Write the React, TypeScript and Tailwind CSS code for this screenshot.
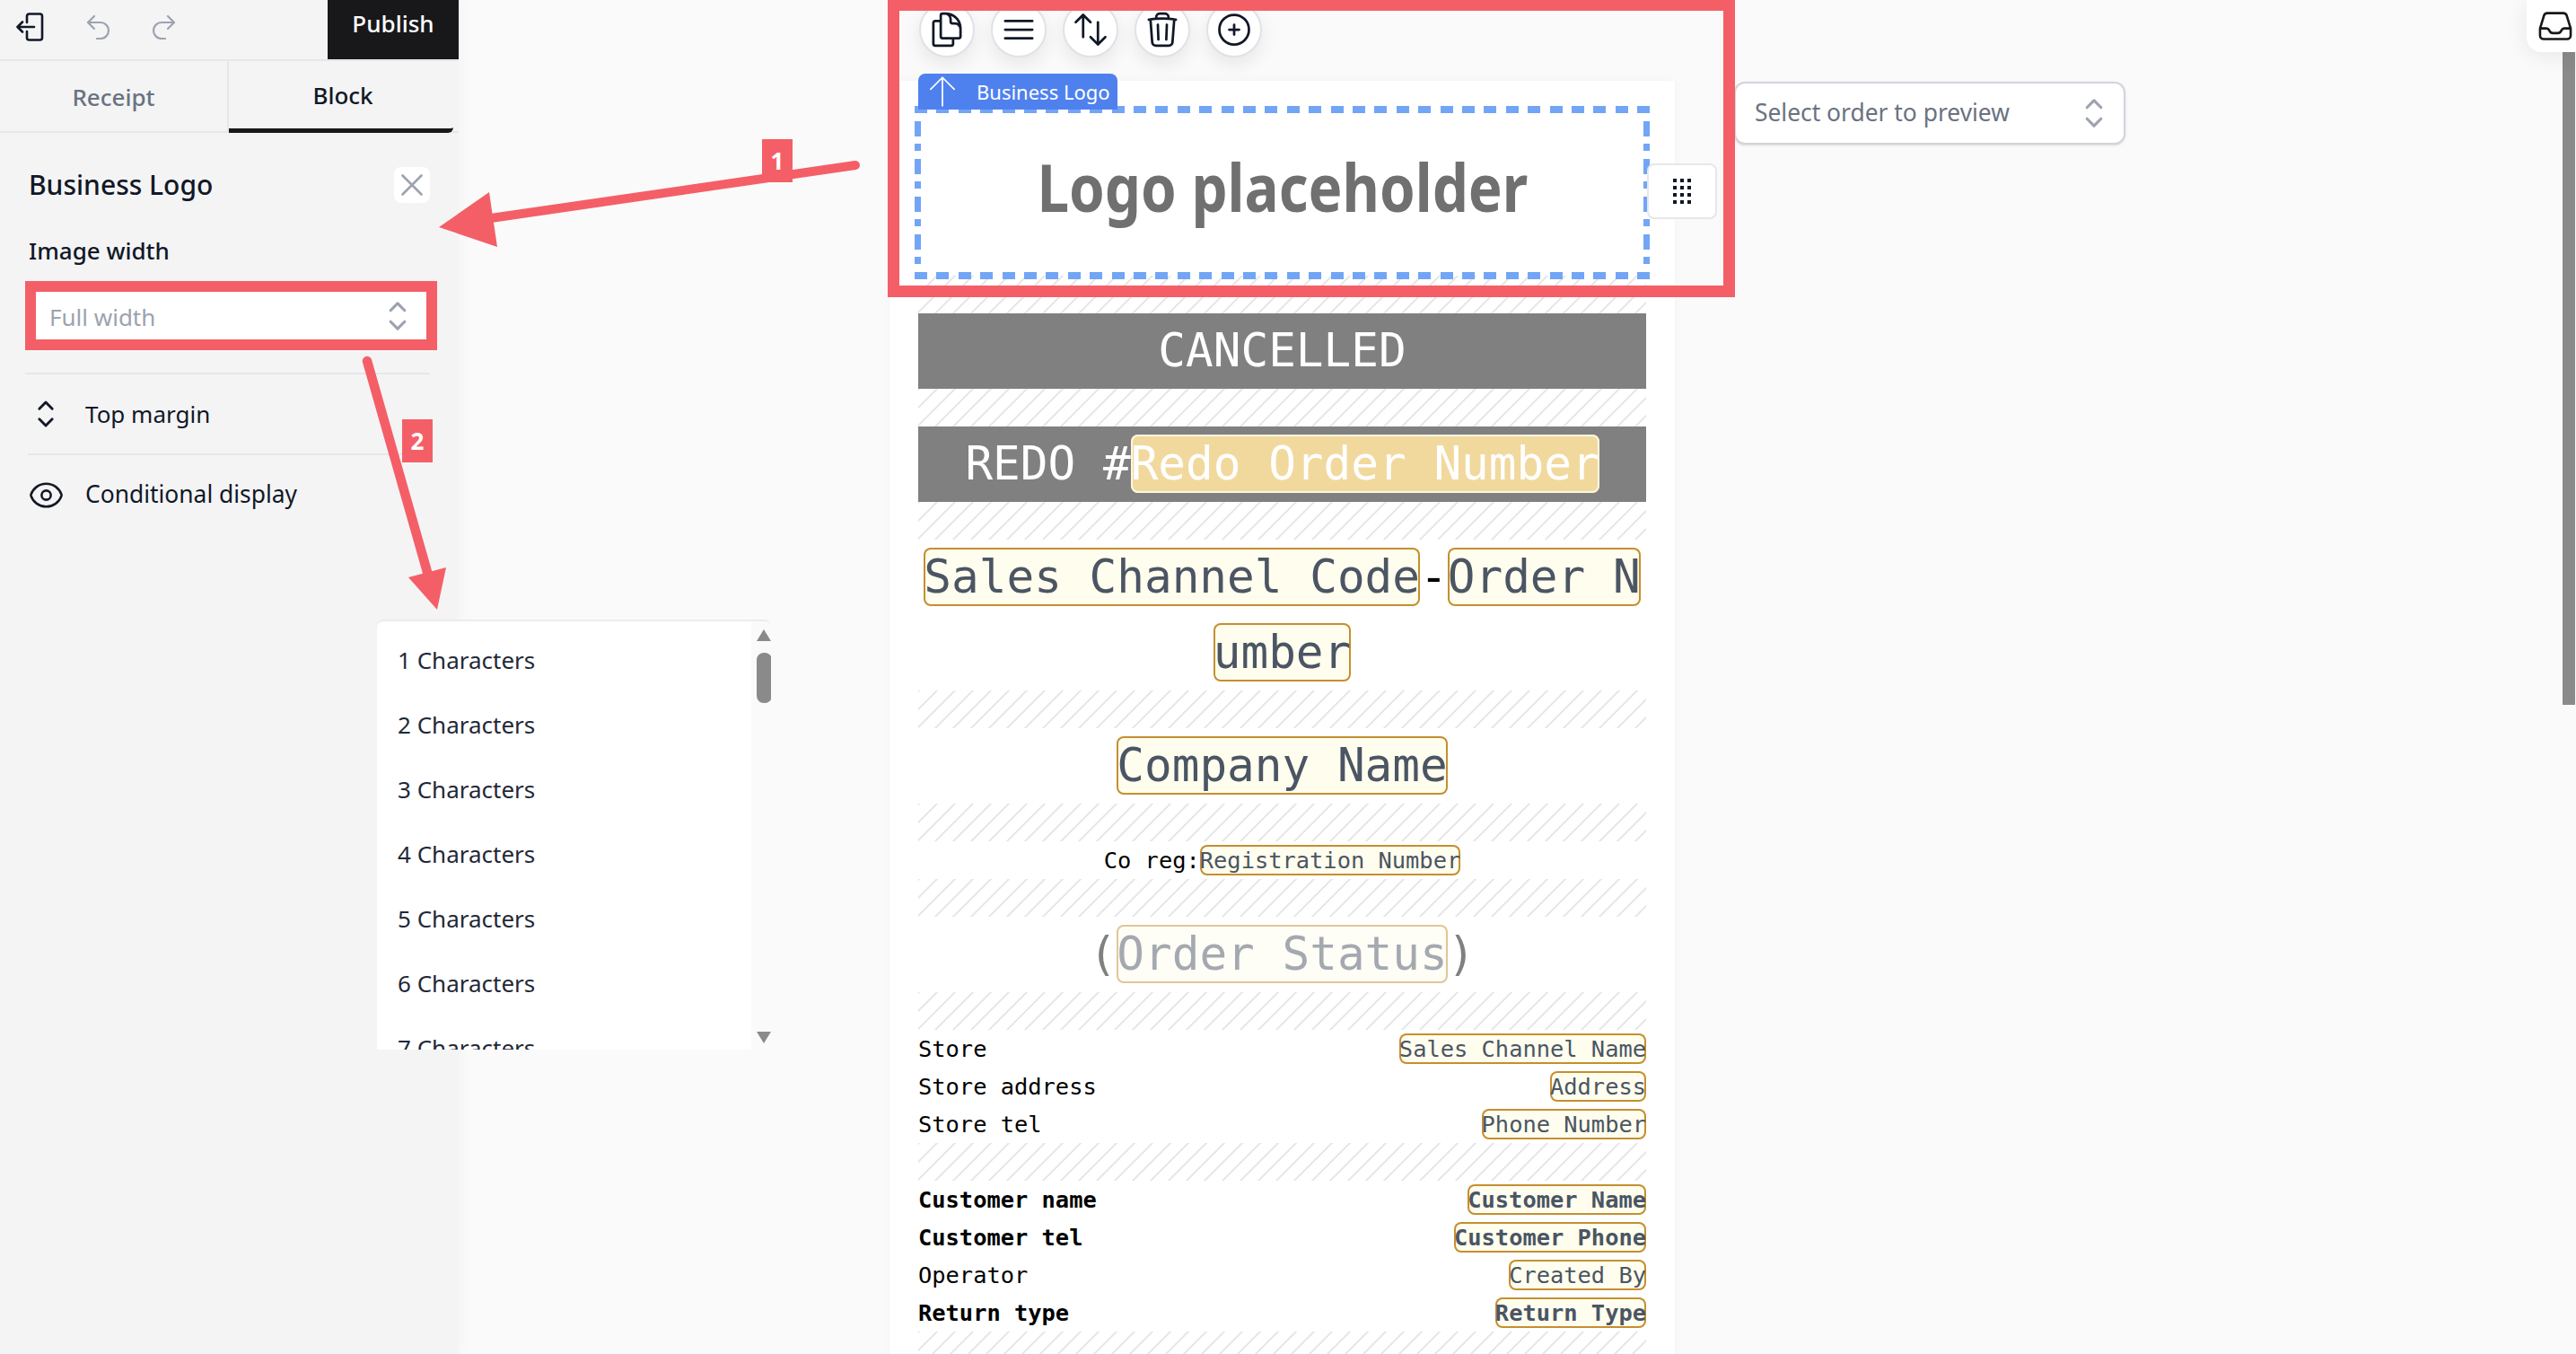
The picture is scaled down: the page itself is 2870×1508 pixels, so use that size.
import React from 'react'
import {
  HiOutlineDocumentDuplicate, HiOutlineBars3, HiOutlineArrowsUpDown, HiOutlineTrash, HiOutlinePlusCircle,
  HiOutlineInbox, HiOutlineArrowUp, HiOutlineXMark, HiOutlineChevronUpDown, HiOutlineEye,
} from 'react-icons/hi2'

const RED = '#f45f67'

function Hatch() {
  return <div className="h-[42px] bg-[repeating-linear-gradient(135deg,#e8e8e8_0,#e8e8e8_1.7px,transparent_1.7px,transparent_14.14px)]" />
}

function Chip({ children, small }: { children: React.ReactNode; small?: boolean }) {
  return (
    <span className={`bg-[#fefdee] text-[#4b5563] rounded-lg [box-decoration-break:clone] shadow-[inset_0_0_0_2px_#c48f30] ${small ? 'py-[2px]' : 'py-[3px]'}`}>
      {children}
    </span>
  )
}

function Row({ label, value, bold }: { label: string; value: string; bold?: boolean }) {
  return (
    <div className={`flex justify-between text-[25.4px] leading-[42px] text-black ${bold ? 'font-bold' : ''}`}>
      <span>{label}</span>
      <span><Chip small>{value}</Chip></span>
    </div>
  )
}

function ExitIcon() {
  return (
    <svg width="32" height="32" viewBox="0 0 32 32" fill="none" stroke="#111827" strokeWidth="2.6" strokeLinecap="round" strokeLinejoin="round">
      <path d="M12 11V4a2.5 2.5 0 0 1 2.5-2.5h12A2.5 2.5 0 0 1 29 4v24a2.5 2.5 0 0 1-2.5 2.5h-12A2.5 2.5 0 0 1 12 28v-7" />
      <path d="M20 16H2M7 10.5 1.5 16 7 21.5" />
    </svg>
  )
}

function UndoIcon({ flip }: { flip?: boolean }) {
  return (
    <svg width="28" height="28" viewBox="0 0 28 28" fill="none" stroke="#9ca3af" strokeWidth="2.2" strokeLinecap="round" strokeLinejoin="round" className={flip ? '-scale-x-100' : ''}>
      <path d="M9 2 2 9l7 7" />
      <path d="M2 9h14a9 9 0 0 1 0 18h-4" />
    </svg>
  )
}

function Sidebar() {
  return (
    <aside className="w-[511px] shrink-0 h-full bg-[#f4f4f5] shadow-[4px_0_14px_rgba(0,0,0,0.025)] text-[#111827]">
      <div className="flex items-center h-[68px] border-b-2 border-[#e5e7eb]">
        <div className="flex items-center gap-[46px] pl-[18px] flex-1 pb-[6px]">
          <div className="flex items-center gap-[46px]">
            <ExitIcon />
            <div className="flex items-center gap-[44px]">
              <UndoIcon />
              <UndoIcon flip />
            </div>
          </div>
        </div>
        <div className="w-[146px] h-[66px] self-start bg-[#18181b] text-white text-[26px] font-medium text-center leading-[52px]">Publish</div>
      </div>
      <div className="flex h-[80px] border-b-2 border-[#e5e7eb] text-[26px]">
        <div className="w-[255px] border-r-2 border-[#e5e7eb] flex items-center justify-center text-[#6b7280] font-medium pt-[2px]">Receipt</div>
        <div className="w-[250px] -mb-[2px] border-b-[5px] border-[#18181b] rounded-br-md flex items-center justify-center font-medium pt-[2px] pl-1">Block</div>
      </div>
      <div className="px-[32px] pt-[38px]">
        <div className="flex items-center justify-between h-[40px]">
          <span className="text-[30px] font-medium leading-none">Business Logo</span>
          <div className="w-[40px] h-[40px] bg-white rounded-lg flex items-center justify-center text-[#9ca3af]">
            <HiOutlineXMark size={42} className="shrink-0" />
          </div>
        </div>
        <div className="mt-[33px] text-[26px] font-medium leading-[40px]">Image width</div>
        <div className="mt-[14px] -mx-[4px] border-[12px] border-[#f45f67] w-[459px] h-[77px] bg-white flex items-center justify-between pl-[15px] pr-[7px]">
          <span className="text-[26px] text-[#9ca3af] pt-[4px]">Full width</span>
          <HiOutlineChevronUpDown size={50} className="text-[#9ca3af] shrink-0" />
        </div>
        <div className="mt-[25px] border-t-2 border-[#e5e7eb] h-[90px] flex items-center gap-[21px] -ml-[4px]">
          <HiOutlineChevronUpDown size={46} className="text-[#111827] shrink-0" />
          <span className="text-[26px]">Top margin</span>
        </div>
        <div className="border-t-2 border-[#e5e7eb] h-[90px] flex items-center gap-[23px] -ml-[1px]">
          <HiOutlineEye size={41} className="shrink-0" />
          <span className="text-[26.4px]">Conditional display</span>
        </div>
      </div>
    </aside>
  )
}

function Receipt() {
  return (
    <div className="mt-[26px] w-[875px] min-h-[1500px] bg-white px-[32px] pt-[28px] relative shadow-[0_0_10px_rgba(0,0,0,0.03)] font-['DejaVu_Sans_Mono',monospace]">
      <div className="absolute left-[32px] -top-[8px] w-[222px] h-[40px] z-10 bg-[#4f81ee] rounded-t-lg flex items-center text-white pl-[6px] gap-[17px] font-['Noto_Sans',sans-serif]">
        <HiOutlineArrowUp size={42} strokeWidth={1} className="shrink-0" />
        <span className="text-[22px] whitespace-nowrap">Business Logo</span>
      </div>
      <div className="relative h-[189px] flex items-center justify-center pb-[10px] font-['Noto_Sans',sans-serif]">
        <div className="absolute -left-[4px] -right-[4px] top-0 -bottom-[4px] [background:repeating-linear-gradient(90deg,#72a5f6_0_14px,transparent_14px_24.4px)_top/100%_8px_no-repeat,repeating-linear-gradient(90deg,#72a5f6_0_14px,transparent_14px_24.4px)_bottom/100%_8px_no-repeat,repeating-linear-gradient(180deg,#72a5f6_0_8px,transparent_8px_17px,#72a5f6_17px_34px,transparent_34px_42px)_left/7px_100%_no-repeat,repeating-linear-gradient(180deg,#72a5f6_0_8px,transparent_8px_17px,#72a5f6_17px_34px,transparent_34px_42px)_right/7px_100%_no-repeat]" />
        <span className="inline-block text-[74px] font-bold text-[#707070] scale-x-[0.86] whitespace-nowrap">Logo placeholder</span>
        <div className="absolute left-[812px] top-[64px] w-[78px] h-[62px] bg-white border-2 border-[#e5e7eb] rounded-lg flex items-center justify-center">
          <svg width="20" height="28" viewBox="0 0 20 28" fill="#111827">
            {[0, 8, 16].flatMap((x) => [0, 8, 16, 24].map((y) => <rect key={`${x}-${y}`} x={x} y={y} width="4" height="4" />))}
          </svg>
        </div>
      </div>
      <Hatch />
      <div className="bg-[#808080] text-white text-[51px] leading-[84px] text-center">CANCELLED</div>
      <Hatch />
      <div className="bg-[#808080] text-white text-[51px] leading-[84px] text-center">
        REDO #<span className="bg-[#f1d99e] rounded-lg py-[3px] shadow-[inset_0_0_0_2px_#fdf6e0]">Redo Order Number</span>
      </div>
      <Hatch />
      <div className="text-[51px] leading-[84px] text-center break-all text-black">
        <Chip>Sales Channel Code</Chip>-<Chip>Order Number</Chip>
      </div>
      <Hatch />
      <div className="text-[51px] leading-[84px] text-center"><Chip>Company Name</Chip></div>
      <Hatch />
      <div className="text-[25.4px] leading-[42px] text-center text-black">Co reg:<Chip small>Registration Number</Chip></div>
      <Hatch />
      <div className="text-[51px] leading-[84px] text-center text-[#808080]">
        (<span className="opacity-50"><Chip>Order Status</Chip></span>)
      </div>
      <Hatch />
      <Row label="Store" value="Sales Channel Name" />
      <Row label="Store address" value="Address" />
      <Row label="Store tel" value="Phone Number" />
      <Hatch />
      <Row label="Customer name" value="Customer Name" bold />
      <Row label="Customer tel" value="Customer Phone" bold />
      <Row label="Operator" value="Created By" />
      <Row label="Return type" value="Return Type" bold />
      <Hatch />
    </div>
  )
}

function Dropdown() {
  const items = [1, 2, 3, 4, 5, 6, 7]
  return (
    <div className="absolute left-[420px] top-[690px] w-[439px] h-[479px] overflow-hidden bg-white rounded-t-lg border-t-2 border-[#ececec]">
      <div className="pt-[7px] pl-[23px]">
        {items.map((n) => (
          <div key={n} className="h-[72px] flex items-center text-[26px] text-[#1f2937]">{n} Characters</div>
        ))}
      </div>
      <div className="absolute right-0 top-0 bottom-0 w-[22px] bg-[#fafafa]">
        <div className="absolute left-[6px] top-[9px] w-0 h-0 border-x-[8px] border-x-transparent border-b-[13px] border-b-[#8a8a8a]" />
        <div className="absolute left-[6px] top-[35px] w-[17px] h-[56px] rounded-lg bg-[#8a8a8a]" />
        <div className="absolute left-[6px] bottom-[7px] w-0 h-0 border-x-[8px] border-x-transparent border-t-[13px] border-t-[#8a8a8a]" />
      </div>
    </div>
  )
}

function Annotations() {
  return (
    <>
      <svg className="absolute inset-0 pointer-events-none" width="2870" height="1508" fill={RED} stroke="none">
        <line x1="953" y1="184" x2="540" y2="244" stroke={RED} strokeWidth="10" strokeLinecap="round" />
        <polygon points="489,253 545,214 554,275" />
        <line x1="409" y1="402" x2="476" y2="637" stroke={RED} strokeWidth="10.5" strokeLinecap="round" />
        <polygon points="455,643 497,632 487,679" />
      </svg>
      <div className="absolute left-[849px] top-[155px] w-[34px] h-[48px] bg-[#f45f67] text-white font-bold text-[26px] flex items-center justify-center">1</div>
      <div className="absolute left-[448px] top-[467px] w-[34px] h-[48px] bg-[#f45f67] text-white font-bold text-[26px] flex items-center justify-center">2</div>
      <div className="absolute left-[989px] -top-[1px] w-[944px] h-[332px] border-[13px] border-[#f45f67] pointer-events-none" />
    </>
  )
}

export default function App() {
  const toolbar = [HiOutlineDocumentDuplicate, HiOutlineBars3, HiOutlineArrowsUpDown, HiOutlineTrash, HiOutlinePlusCircle]
  return (
    <div className="relative w-[2870px] h-[1508px] overflow-hidden bg-[#fafafa] flex font-['Noto_Sans',sans-serif]">
      <Sidebar />
      <main className="flex items-start pl-[480px]">
        <div className="w-[875px]">
          <div className="flex gap-[18px] pl-[33px] pt-[2px]">
            {toolbar.map((Icon, i) => (
              <button key={i} className="w-[62px] h-[62px] rounded-full bg-white border-2 border-[#e0e2e6] shadow-[0_8px_20px_rgba(0,0,0,0.08)] flex items-center justify-center text-[#111827]">
                <Icon size={44} />
              </button>
            ))}
          </div>
          <Receipt />
        </div>
        <div className="ml-[66px] mt-[91px] w-[436px] h-[70px] bg-white border-2 border-[#d1d5db] rounded-xl shadow-sm flex items-center justify-between pl-[21px] pr-[8px]">
          <span className="text-[26.4px] text-[#6b7280]">Select order to preview</span>
          <HiOutlineChevronUpDown size={50} className="text-[#9ca3af] shrink-0" />
        </div>
      </main>
      <Dropdown />
      <div className="absolute right-0 top-0 w-[55px] h-[58px] bg-white rounded-bl-2xl shadow-[0_4px_24px_rgba(0,0,0,0.08)] flex items-center pl-[11px] z-10">
        <HiOutlineInbox size={42} className="text-[#18181b] shrink-0" />
      </div>
      <div className="absolute left-[2855px] top-[58px] w-[14px] h-[727px] bg-[#8a8a8a]" />
      <Annotations />
    </div>
  )
}
